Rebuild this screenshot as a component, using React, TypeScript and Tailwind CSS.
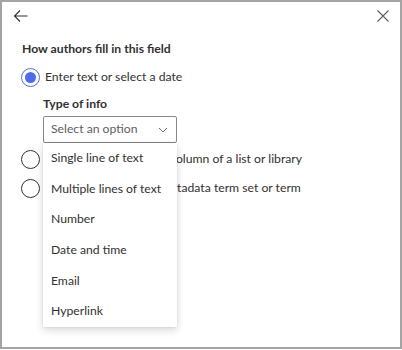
import { useState } from "react";

const options = [
	"Single line of text",
	"Multiple lines of text",
	"Number",
	"Date and time",
	"Email",
	"Hyperlink",
];

function Radio({ checked }: { checked?: boolean }) {
	return (
		<span
			className={`flex h-[19px] w-[19px] shrink-0 items-center justify-center rounded-full border ${
				checked ? "border-[#4f6bed]" : "border-[#323130]"
			}`}
		>
			{checked && <span className="h-[11px] w-[11px] rounded-full bg-[#4f6bed]" />}
		</span>
	);
}

export default function App() {
	const [open] = useState(true);

	return (
		<div
			className="relative h-[349px] w-[402px] border-2 border-[#a4a4a4] bg-white text-[#323130]"
			style={{ fontFamily: 'Lato, "Noto Sans", sans-serif' }}
		>
			{/* Header */}
			<div className="flex items-center justify-between pl-[11px] pr-[10px] pt-[6px]">
				<svg width="16" height="16" viewBox="0 0 16 16" fill="none" stroke="#323130" strokeWidth="1.1">
					<path d="M1.5 8h13M7 2.5 1.5 8 7 13.5" />
				</svg>
				<svg width="14" height="14" viewBox="0 0 14 14" fill="none" stroke="#605e5c" strokeWidth="1.1">
					<path d="M1.5 1.5l11 11M12.5 1.5l-11 11" />
				</svg>
			</div>

			<div className="pl-[19px] pt-[15px]">
				<h2 className="pl-[1px] text-[12.2px] font-bold leading-[20px]">How authors fill in this field</h2>

				<label className="mt-[8px] flex items-center gap-[5px] text-[12.2px] leading-[20px]">
					<Radio checked />
					<span>Enter text or select a date</span>
				</label>

				<div className="ml-[22px] mt-[7px]">
					<div className="text-[12.2px] font-bold leading-[20px]">Type of info</div>
					<div className="relative mt-[2px] w-[134px]">
						<button className="flex h-[27px] w-full items-center justify-between rounded-[2px] border border-[#8a8886] bg-white pl-[7px] pr-[8px] text-[12.2px] text-[#605e5c]">
							<span>Select an option</span>
							<svg width="10" height="10" viewBox="0 0 10 10" fill="none" stroke="#605e5c" strokeWidth="0.9">
								<path d="M1 3l4 4 4-4" />
							</svg>
						</button>
						{open && (
							<ul className="absolute left-0 top-[27px] z-10 w-[134px] bg-white shadow-[0_3px_8px_rgba(0,0,0,0.16),0_0_2px_rgba(0,0,0,0.1)]">
								{options.map((o) => (
									<li key={o} className="flex h-[30.6px] items-center whitespace-nowrap pl-[8px] text-[12.2px] text-[#323130]">
										{o}
									</li>
								))}
							</ul>
						)}
					</div>
				</div>

				<label className="mt-[6px] flex items-center gap-[5px] text-[12.2px] leading-[20px]">
					<Radio />
					<span>Select the value from a column of a list or library</span>
				</label>
				<label className="mt-[9px] flex items-center gap-[5px] text-[12.2px] leading-[20px]">
					<Radio />
					<span>Select from managed metadata term set or term</span>
				</label>
			</div>
		</div>
	);
}
